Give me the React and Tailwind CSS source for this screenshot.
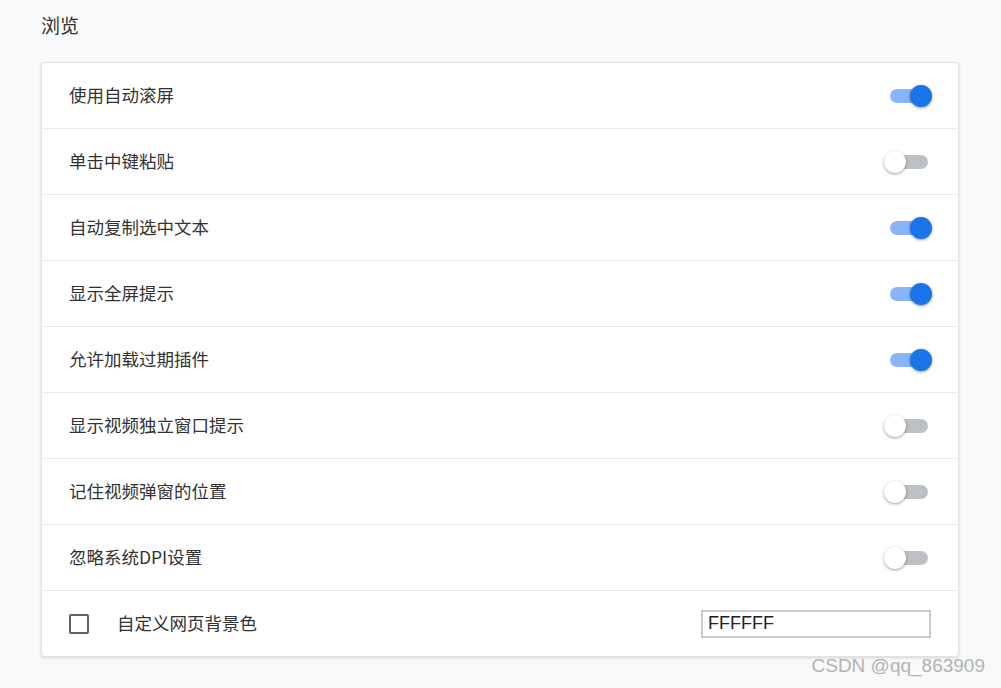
import { useState } from 'react';

const rows = [
  { label: '使用自动滚屏', on: true },
  { label: '单击中键粘贴', on: false },
  { label: '自动复制选中文本', on: true },
  { label: '显示全屏提示', on: true },
  { label: '允许加载过期插件', on: true },
  { label: '显示视频独立窗口提示', on: false },
  { label: '记住视频弹窗的位置', on: false },
  { label: '忽略系统DPI设置', on: false },
];

const Toggle = ({ on, onClick }) => (
  <button type="button" onClick={onClick} className="relative w-[48px] h-[22px] shrink-0">
    <span
      className={`absolute left-[6px] top-[4px] w-[38px] h-[14px] rounded-full ${
        on ? 'bg-[#8ab4f8]' : 'bg-[#bdc1c6]'
      }`}
    />
    <span
      className={`absolute top-0 w-[22px] h-[22px] rounded-full shadow-[0_1px_3px_rgba(0,0,0,0.4)] ${
        on ? 'left-[26px] bg-[#1a73e8]' : 'left-0 bg-white'
      }`}
    />
  </button>
);

const App = () => {
  const [settings, setSettings] = useState(rows);
  const [custom, setCustom] = useState(false);
  const [color, setColor] = useState('FFFFFF');

  const flip = (i) =>
    setSettings((s) => s.map((r, j) => (j === i ? { ...r, on: !r.on } : r)));

  return (
    <div
      className="w-[1001px] h-[688px] bg-[#f8f9fa] text-[#333] relative overflow-hidden"
      style={{ fontFamily: '"Noto Sans CJK SC", "Liberation Sans", sans-serif' }}
    >
      <div className="pl-[41px] pr-[42px]">
        <h2 className="h-[62px] pt-[11px] text-[19px] leading-[28px] font-normal text-[#333]">浏览</h2>

        {/* Settings card */}
        <div className="bg-white rounded-[4px] border border-[#e3e3e3] shadow-[0_1px_3px_rgba(0,0,0,0.15)]">
          {settings.map((row, i) => (
            <div
              key={row.label}
              className="h-[66px] flex items-center justify-between pl-[27px] pr-[26px] border-b border-[#ebebeb]"
            >
              <span className="text-[17.5px]">{row.label}</span>
              <Toggle on={row.on} onClick={() => flip(i)} />
            </div>
          ))}
          <div className="h-[65px] flex items-center pl-[27px] pr-[27px]">
            <button
              type="button"
              onClick={() => setCustom(!custom)}
              className={`w-[20px] h-[20px] rounded-[2px] border-2 ${
                custom ? 'border-[#1a73e8] bg-[#1a73e8]' : 'border-[#5f6368]'
              }`}
            />
            <span className="ml-[28px] text-[17.5px]">自定义网页背景色</span>
            <input
              value={color}
              onChange={(e) => setColor(e.target.value)}
              className="ml-auto w-[230px] h-[28px] border-2 border-[#ccc] px-[5px] text-[18px] text-[#222] outline-none"
              style={{ fontFamily: '"Liberation Sans", Arial, sans-serif' }}
            />
          </div>
        </div>
      </div>

      <span
        className="absolute right-[16px] bottom-[8px] text-[19px] text-[#b3b3b3]"
        style={{ fontFamily: '"Liberation Sans", Arial, sans-serif' }}
      >
        CSDN @qq_863909
      </span>
    </div>
  );
};

export default App;
